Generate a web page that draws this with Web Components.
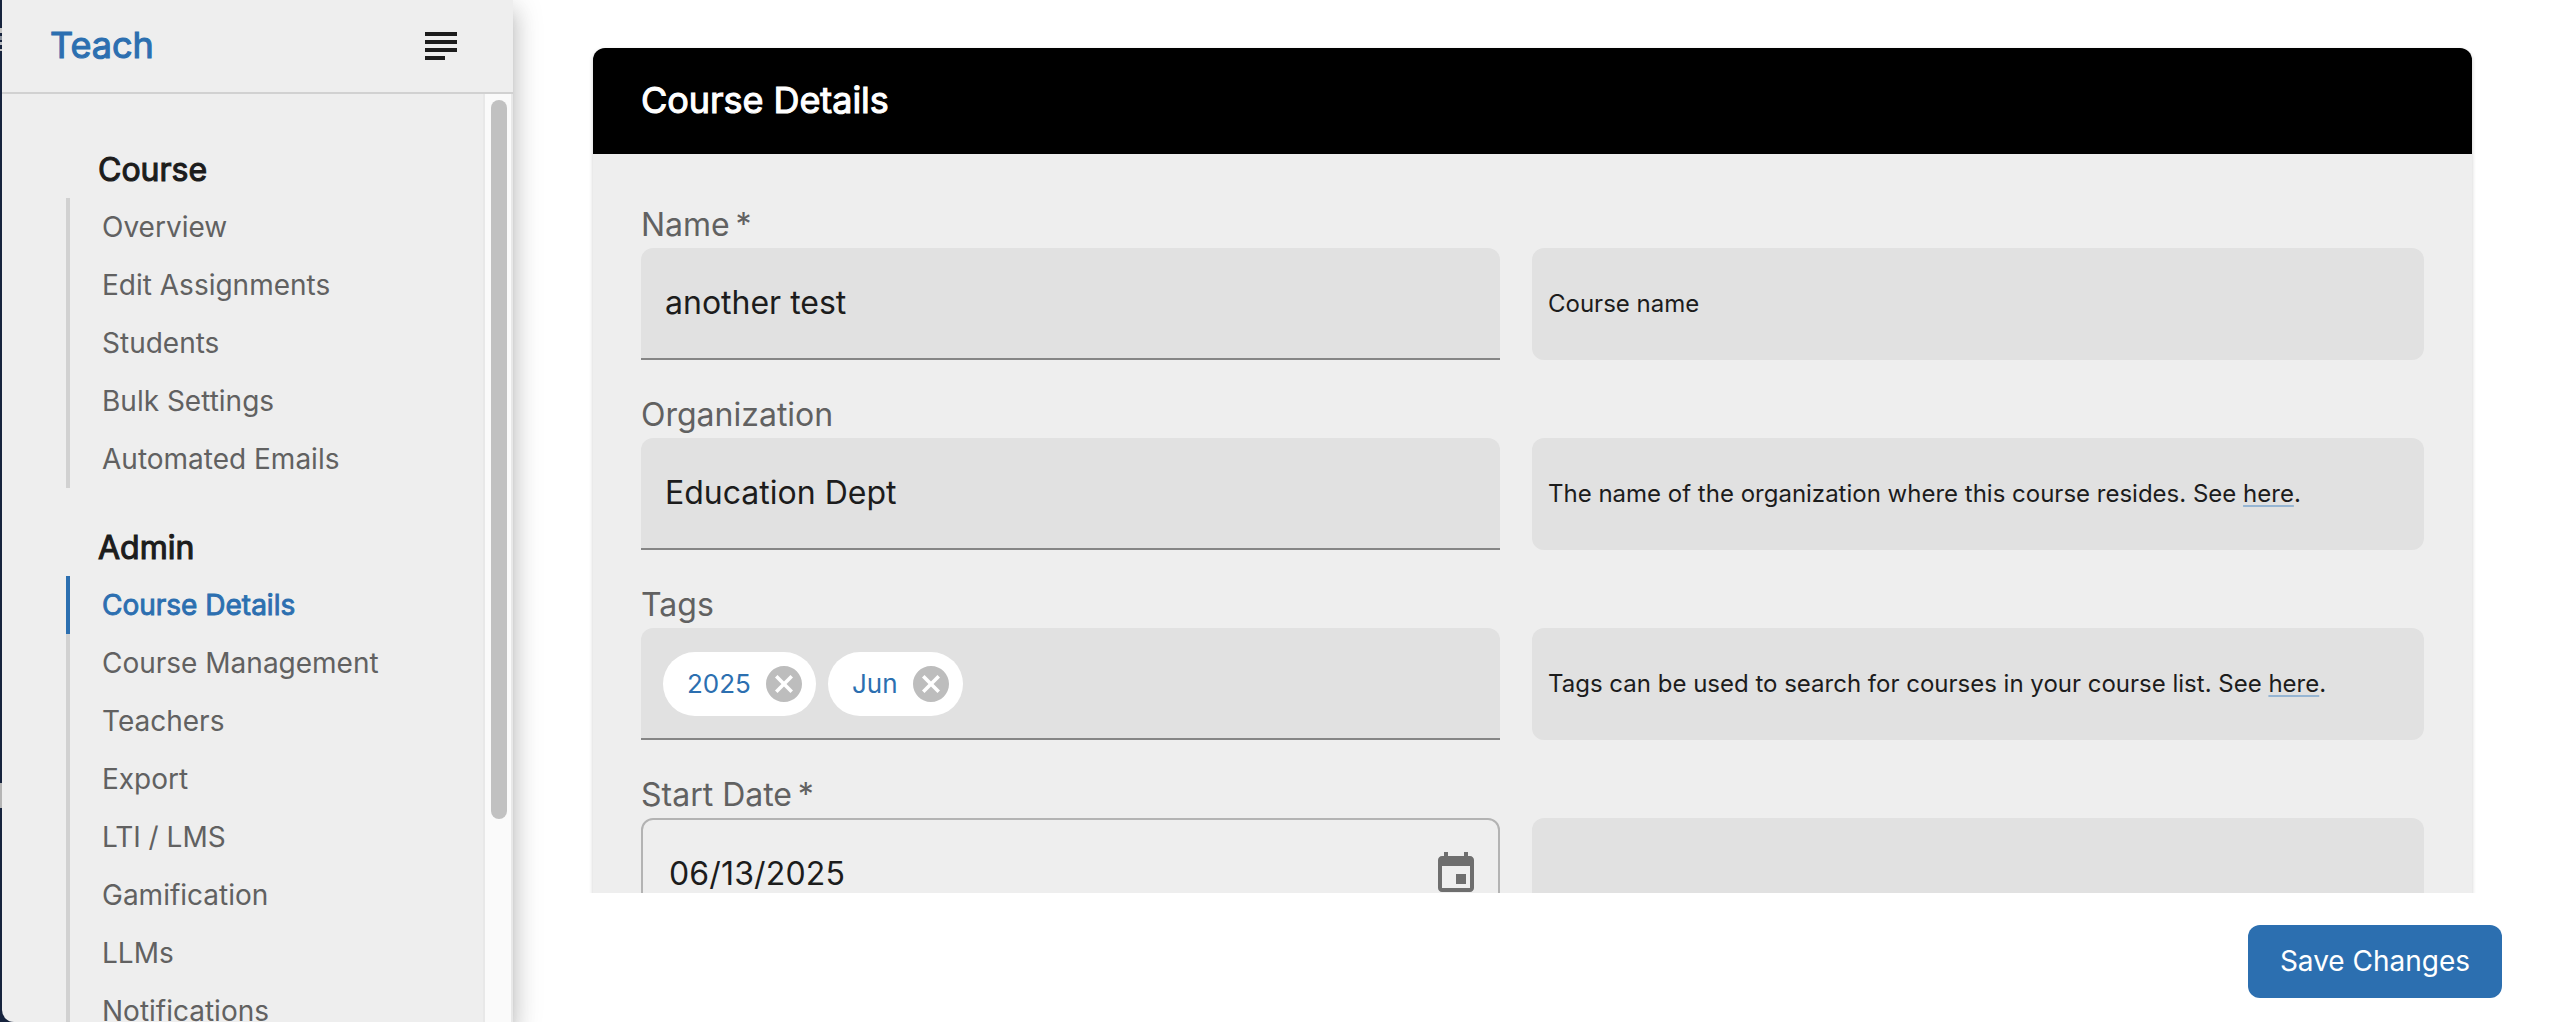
<!DOCTYPE html>
<html lang="en"><head><meta charset="utf-8"><title>Course Details</title>
<style>html,body{margin:0;height:100%;overflow:hidden;background:#fff}body{font-family:Inter,sans-serif;color:#1c1c1c}</style></head>
<body><course-app></course-app>
<script>
const define=(name,html,setup)=>{const t=document.createElement('template');t.innerHTML=html;
customElements.define(name,class extends HTMLElement{constructor(){super();this.attachShadow({mode:'open'}).append(t.content.cloneNode(true));}
connectedCallback(){if(setup)setup(this,this.shadowRoot);}});};

define('nav-item',`<style>
:host{display:flex;align-items:center;height:58px;box-sizing:border-box;border-left:4px solid #d1d1d1;padding-left:32px;font-size:28px;color:#616161;white-space:nowrap}
:host([active]){border-color:#2c6fb0;color:#2c6fb0;-webkit-text-stroke:.9px #2c6fb0}
</style><slot></slot>`);

define('nav-group',`<style>
:host{display:block;margin-left:64px}
h2{margin:0;height:58px;line-height:60px;padding-left:32px;font-size:32px;font-weight:400;-webkit-text-stroke:1.1px #1c1c1c}
</style><h2></h2><slot></slot>`,(el,r)=>{r.querySelector('h2').textContent=el.getAttribute('heading');});

define('menu-icon',`<style>:host{display:block;width:32px;height:28px}svg{display:block}</style>
<svg width="32" height="28" fill="#1c1c1c"><path d="M0 0h32v4H0zM0 8h32v4H0zM0 16h32v4H0zM0 24h20v4H0z"/></svg>`);

define('scroll-bar',`<style>
:host{display:block;box-sizing:border-box;width:30px;background:#fafafa;border:solid #e8e8e8;border-width:0 2px;padding:6px 4px 0 6px}
div{width:16px;height:719px;border-radius:8px;background:#c1c1c1}
</style><div></div>`);

define('side-bar',`<style>
:host{display:flex;flex-direction:column;box-sizing:border-box;width:511px;height:1022px;background:#eee;border-bottom-left-radius:12px}
header{display:flex;align-items:center;justify-content:space-between;box-sizing:border-box;height:94px;border-bottom:2px solid #d1d1d1;padding:0 56px 0 48px}
header b{font-size:36px;font-weight:400;color:#2c6fb0;padding-bottom:2px;-webkit-text-stroke:1.1px #2c6fb0}
.body{flex:1;min-height:0;display:flex;overflow:hidden}
nav{flex:1;display:flex;flex-direction:column;gap:30px;padding-top:46px}
</style><header><b>Teach</b><menu-icon></menu-icon></header>
<div class="body"><nav>
<nav-group heading="Course"><nav-item>Overview</nav-item><nav-item>Edit Assignments</nav-item><nav-item>Students</nav-item><nav-item>Bulk Settings</nav-item><nav-item>Automated Emails</nav-item></nav-group>
<nav-group heading="Admin"><nav-item active>Course Details</nav-item><nav-item>Course Management</nav-item><nav-item>Teachers</nav-item><nav-item>Export</nav-item><nav-item>LTI / LMS</nav-item><nav-item>Gamification</nav-item><nav-item>LLMs</nav-item><nav-item>Notifications</nav-item></nav-group>
</nav><scroll-bar></scroll-bar></div>`);

define('tag-chip',`<style>
:host{display:flex;align-items:center;gap:15px;height:64px;box-sizing:border-box;padding:0 14px 0 24px;margin-top:2px;border-radius:32px;background:#fff;color:#2c6fb0;font-size:26px}
span{padding-bottom:2px}
svg{display:block}
</style><span><slot></slot></span><svg width="36" height="36" viewBox="2 2 20 20" fill="#bdbdbd"><path d="M12 2C6.47 2 2 6.47 2 12s4.47 10 10 10 10-4.47 10-10S17.53 2 12 2zm5 13.59L15.59 17 12 13.41 8.41 17 7 15.59 10.59 12 7 8.41 8.41 7 12 10.59 15.59 7 17 8.41 13.41 12 17 15.59z"/></svg>`);

define('text-box',`<style>
:host{display:flex;align-items:center;gap:12px;box-sizing:border-box;height:112px;padding:0 24px 2px;background:#e1e1e1;border-bottom:2px solid #858585;border-radius:12px 12px 0 0;font-size:32px}
:host([chips]){padding:0 22px}
:host([outlined]){background:none;border:2px solid #b3b3b3;border-radius:12px;padding:0 18px 2px 26px;justify-content:space-between;letter-spacing:.15px}
</style><slot></slot>`);

define('event-icon',`<style>:host{display:block;padding-top:2px}svg{display:block}</style><svg width="48" height="48" viewBox="0 0 24 24" fill="#6e6e6e"><path d="M17 12h-5v5h5v-5zM16 1v2H8V1H6v2H5c-1.11 0-1.99.9-1.99 2L3 19c0 1.1.89 2 2 2h14c1.1 0 2-.9 2-2V5c0-1.1-.9-2-2-2h-1V1h-2zm3 18H5V8h14v11z"/></svg>`);

define('form-row',`<style>
:host{display:grid;grid-template-columns:859px 892px;column-gap:32px;grid-template-rows:48px 112px;flex:none}
label{grid-column:1/-1;font-size:32px;line-height:50px;color:#616161}
.help{box-sizing:border-box;border-radius:12px;background:#e1e1e1;display:flex;align-items:center;padding:0 16px 2px;font-size:24px;white-space:pre}
</style><label></label><slot></slot><div class="help"><slot name="help"></slot></div>`,(el,r)=>{r.querySelector('label').textContent=el.getAttribute('label');});

define('help-link',`<style>:host{display:inline;text-decoration:underline 2px #96b5d3;text-underline-offset:3px;text-decoration-skip-ink:none}</style><slot></slot>`);

define('details-card',`<style>
:host{display:flex;flex-direction:column;box-sizing:border-box;width:1879px;background:#eee;border-radius:12px 12px 0 0;box-shadow:0 2px 4px rgba(0,0,0,.2)}
h1{margin:0;box-sizing:border-box;height:106px;line-height:104px;padding-left:48px;border-radius:12px 12px 0 0;background:#000;color:#fff;font-size:36px;font-weight:400;letter-spacing:-.05px;-webkit-text-stroke:1.1px #fff;flex:none}
.rows{display:flex;flex-direction:column;gap:30px;padding:46px 48px 0}
</style><h1>Course Details</h1><div class="rows"><slot></slot></div>`);

define('save-button',`<style>:host{display:flex}button{all:unset;box-sizing:border-box;width:254px;height:73px;padding-bottom:1px;border-radius:12px;background:#2c6fb0;color:#fff;font-size:28px;text-align:center}</style><button><slot></slot></button>`);

define('window-edge',`<style>:host{display:flex;flex-direction:column;width:2px;height:1022px}i{display:block;flex:none}</style>
<i style="height:28px"></i><i style="height:5px;background:#c4c4c4"></i><i style="height:3px"></i><i style="height:4px;background:#8d939e"></i><i style="height:2px"></i><i style="height:3px;background:#b8bbc1"></i><i style="height:4px"></i><i style="height:2px;background:#c4c4c4"></i><i style="height:732px"></i><i style="height:25px;background:#b5b5b5"></i>`);

define('course-app',`<style>
:host{display:flex;width:2550px;height:1022px;overflow:hidden}
.edge{flex:none;display:flex;width:513px;background:#16233d;box-shadow:0 10px 10px -6px rgba(0,0,0,.2),0 16px 20px 2px rgba(0,0,0,.14),0 6px 28px 4px rgba(0,0,0,.12)}
main{flex:1;display:flex;flex-direction:column}
.view{height:845px;padding:48px 0 0 80px;overflow:hidden;clip-path:inset(0 0 0 60px)}
footer{display:flex;justify-content:flex-end;padding:32px 48px 0 0}
span{white-space:pre}
</style><div class="edge"><window-edge></window-edge><side-bar></side-bar></div>
<main><div class="view"><details-card>
<form-row label="Name&#8201;*"><text-box>another test</text-box><span slot="help">Course name</span></form-row>
<form-row label="Organization"><text-box>Education Dept</text-box><span slot="help">The name of the organization where this course resides. See <help-link>here</help-link>.</span></form-row>
<form-row label="Tags"><text-box chips><tag-chip>2025</tag-chip><tag-chip>Jun</tag-chip></text-box><span slot="help">Tags can be used to search for courses in your course list. See <help-link>here</help-link>.</span></form-row>
<form-row label="Start Date&#8201;*"><text-box outlined>06/13/2025<event-icon></event-icon></text-box></form-row>
</details-card></div><footer><save-button>Save Changes</save-button></footer></main>`);
</script></body></html>
